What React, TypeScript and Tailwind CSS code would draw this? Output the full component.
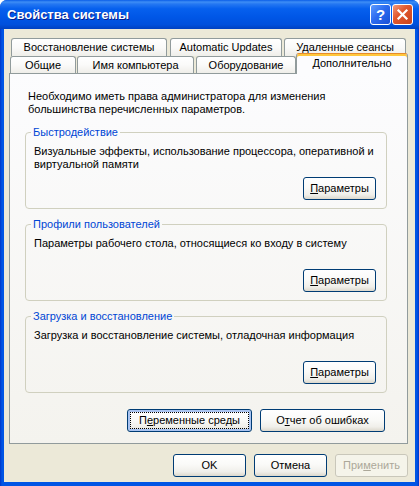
import React from "react";

type BtnProps = {
  children: React.ReactNode;
  w: string;
  focused?: boolean;
  disabled?: boolean;
};

function XpButton({ children, w, focused, disabled }: BtnProps) {
  const skin = disabled
    ? "border-[#C9C7BA] bg-[#F5F4EA] text-[#ACA899]"
    : "border-[#003C74] bg-[linear-gradient(180deg,#FFFFFF_0%,#FAFAF8_45%,#F0EFEA_80%,#DCD8CC_100%)] text-black";
  const ring = focused ? "shadow-[inset_0_0_0_2px_#A9C3F0]" : "";
  return (
    <button
      className={`flex h-[23px] ${w} shrink-0 rounded-[3px] border p-[2px] text-[11px] leading-[13px] ${skin} ${ring}`}
    >
      <span
        className={`flex h-full w-full items-center justify-center border ${
          focused ? "border-dotted border-black" : "border-transparent"
        }`}
      >
        {children}
      </span>
    </button>
  );
}

function Tab({ label, w, ml = "" }: { label: string; w: string; ml?: string }) {
  return (
    <div
      className={`${w} ${ml} h-full shrink-0 rounded-t-[3px] border-x border-t border-[#919B9C] bg-[linear-gradient(180deg,#FFFFFF_0%,#FAFAF9_50%,#EFEEE9_100%)] pt-[2px] text-center text-[11px] leading-[13px] text-black`}
    >
      {label}
    </div>
  );
}

function Group({ title, lines, h }: { title: string; lines: string[]; h: string }) {
  return (
    <fieldset className="ml-[15px] w-[362px] rounded-[4px] border border-[#D0D0BF] pb-[8px]">
      <legend className="ml-[5px] px-[2px] text-[11px] leading-[13px] text-[#0046D5]">{title}</legend>
      <div className={`flex ${h} flex-col pl-[8px] pr-[10px] pt-[6px]`}>
        {lines.map((l) => (
          <div key={l} className="whitespace-nowrap text-[11px] leading-[13px] text-black">
            {l}
          </div>
        ))}
        <div className="mt-auto flex justify-end">
          <XpButton w="w-[73px]">
            <span className="underline">П</span>араметры
          </XpButton>
        </div>
      </div>
    </fieldset>
  );
}

export default function App() {
  return (
    <div className="flex h-[486px] w-[419px] flex-col overflow-hidden rounded-t-[7px] bg-[linear-gradient(90deg,#0035C8_0px,#0055E5_2px,#0055E5_calc(100%-2px),#0035C8_100%)] font-['Liberation_Sans',Arial,sans-serif]">
      {/* title bar */}
      <div className="flex h-[29px] shrink-0 items-center bg-[linear-gradient(180deg,#0A5DE8_0%,#3E8EF5_7%,#2477F2_14%,#0660EE_30%,#0056E6_60%,#0050DC_85%,#0041C0_100%)] pl-[7px] pr-[6px]">
        <div className="flex-1 text-[13px] font-bold leading-[16px] text-white [text-shadow:1px_1px_0_#0A1E8C]">
          Свойства системы
        </div>
        <div className="flex gap-[1px]">
          <div className="flex h-[21px] w-[21px] items-center justify-center rounded-[3px] border border-white bg-[linear-gradient(135deg,#5D9BFF_0%,#2C6CF0_45%,#1A4FD6_100%)] text-[15px] font-bold leading-none text-white">
            ?
          </div>
          <div className="flex h-[21px] w-[21px] items-center justify-center rounded-[3px] border border-white bg-[linear-gradient(135deg,#F39A7C_0%,#E2592F_40%,#C8431D_100%)]">
            <svg width="13" height="13" viewBox="0 0 13 13">
              <path d="M2.5 2.5L10.5 10.5M10.5 2.5L2.5 10.5" stroke="white" strokeWidth="2.2" strokeLinecap="square" />
            </svg>
          </div>
        </div>
      </div>

      {/* body */}
      <div className="mx-[4px] flex h-[453px] shrink-0 flex-col bg-[#ECE9D8] pt-[9px]">
        <div className="flex h-[18px] pl-[7px]">
          <Tab label="Восстановление системы" w="w-[156px]" />
          <Tab label="Automatic Updates" w="w-[112px]" ml="ml-[3px]" />
          <Tab label="Удаленные сеансы" w="w-[122px]" ml="ml-[2px]" />
        </div>
        <div className="flex h-[17px] items-end pl-[6px]">
          <Tab label="Общие" w="w-[66px]" />
          <Tab label="Имя компьютера" w="w-[117px]" ml="ml-[1px]" />
          <Tab label="Оборудование" w="w-[100px]" ml="ml-[2px]" />
          <div className="relative z-10 -mb-px h-[21px] w-[112px] shrink-0 rounded-t-[3px] border-x border-t border-[#919B9C] border-t-[#E68B2C] bg-[#FCFCFE] pt-[3px] text-center text-[11px] leading-[13px] text-black shadow-[inset_0_2px_0_#FFC73C]">
            Дополнительно
          </div>
        </div>

        {/* panel */}
        <div className="ml-[5px] flex h-[371px] w-[399px] shrink-0 flex-col border border-[#919B9C] bg-[linear-gradient(180deg,#FCFCFE_0%,#F4F3EE_100%)] pt-[16px]">
          <div className="pl-[18px] text-[11px] leading-[13px] text-black">
            <div className="whitespace-nowrap">Необходимо иметь права администратора для изменения</div>
            <div className="whitespace-nowrap">большинства перечисленных параметров.</div>
          </div>
          <div className="mt-[10px]">
            <Group
              title="Быстродействие"
              h="h-[61px]"
              lines={["Визуальные эффекты, использование процессора, оперативной и", "виртуальной памяти"]}
            />
          </div>
          <div className="mt-[9px]">
            <Group
              title="Профили пользователей"
              h="h-[61px]"
              lines={["Параметры рабочего стола, относящиеся ко входу в систему"]}
            />
          </div>
          <div className="mt-[9px]">
            <Group
              title="Загрузка и восстановление"
              h="h-[61px]"
              lines={["Загрузка и восстановление системы, отладочная информация"]}
            />
          </div>
          <div className="ml-[15px] mt-[16px] flex w-[362px] justify-end gap-[8px] pr-[2px]">
            <XpButton w="w-[125px]" focused>
              П<span className="underline">е</span>ременные среды
            </XpButton>
            <XpButton w="w-[125px]">
              О<span className="underline">т</span>чет об ошибках
            </XpButton>
          </div>
        </div>

        {/* dialog buttons */}
        <div className="mt-[10px] flex justify-end gap-[8px] pr-[7px]">
          <XpButton w="w-[73px]">OK</XpButton>
          <XpButton w="w-[73px]">Отмена</XpButton>
          <XpButton w="w-[73px]" disabled>
            При<span className="underline">м</span>енить
          </XpButton>
        </div>
      </div>
    </div>
  );
}
